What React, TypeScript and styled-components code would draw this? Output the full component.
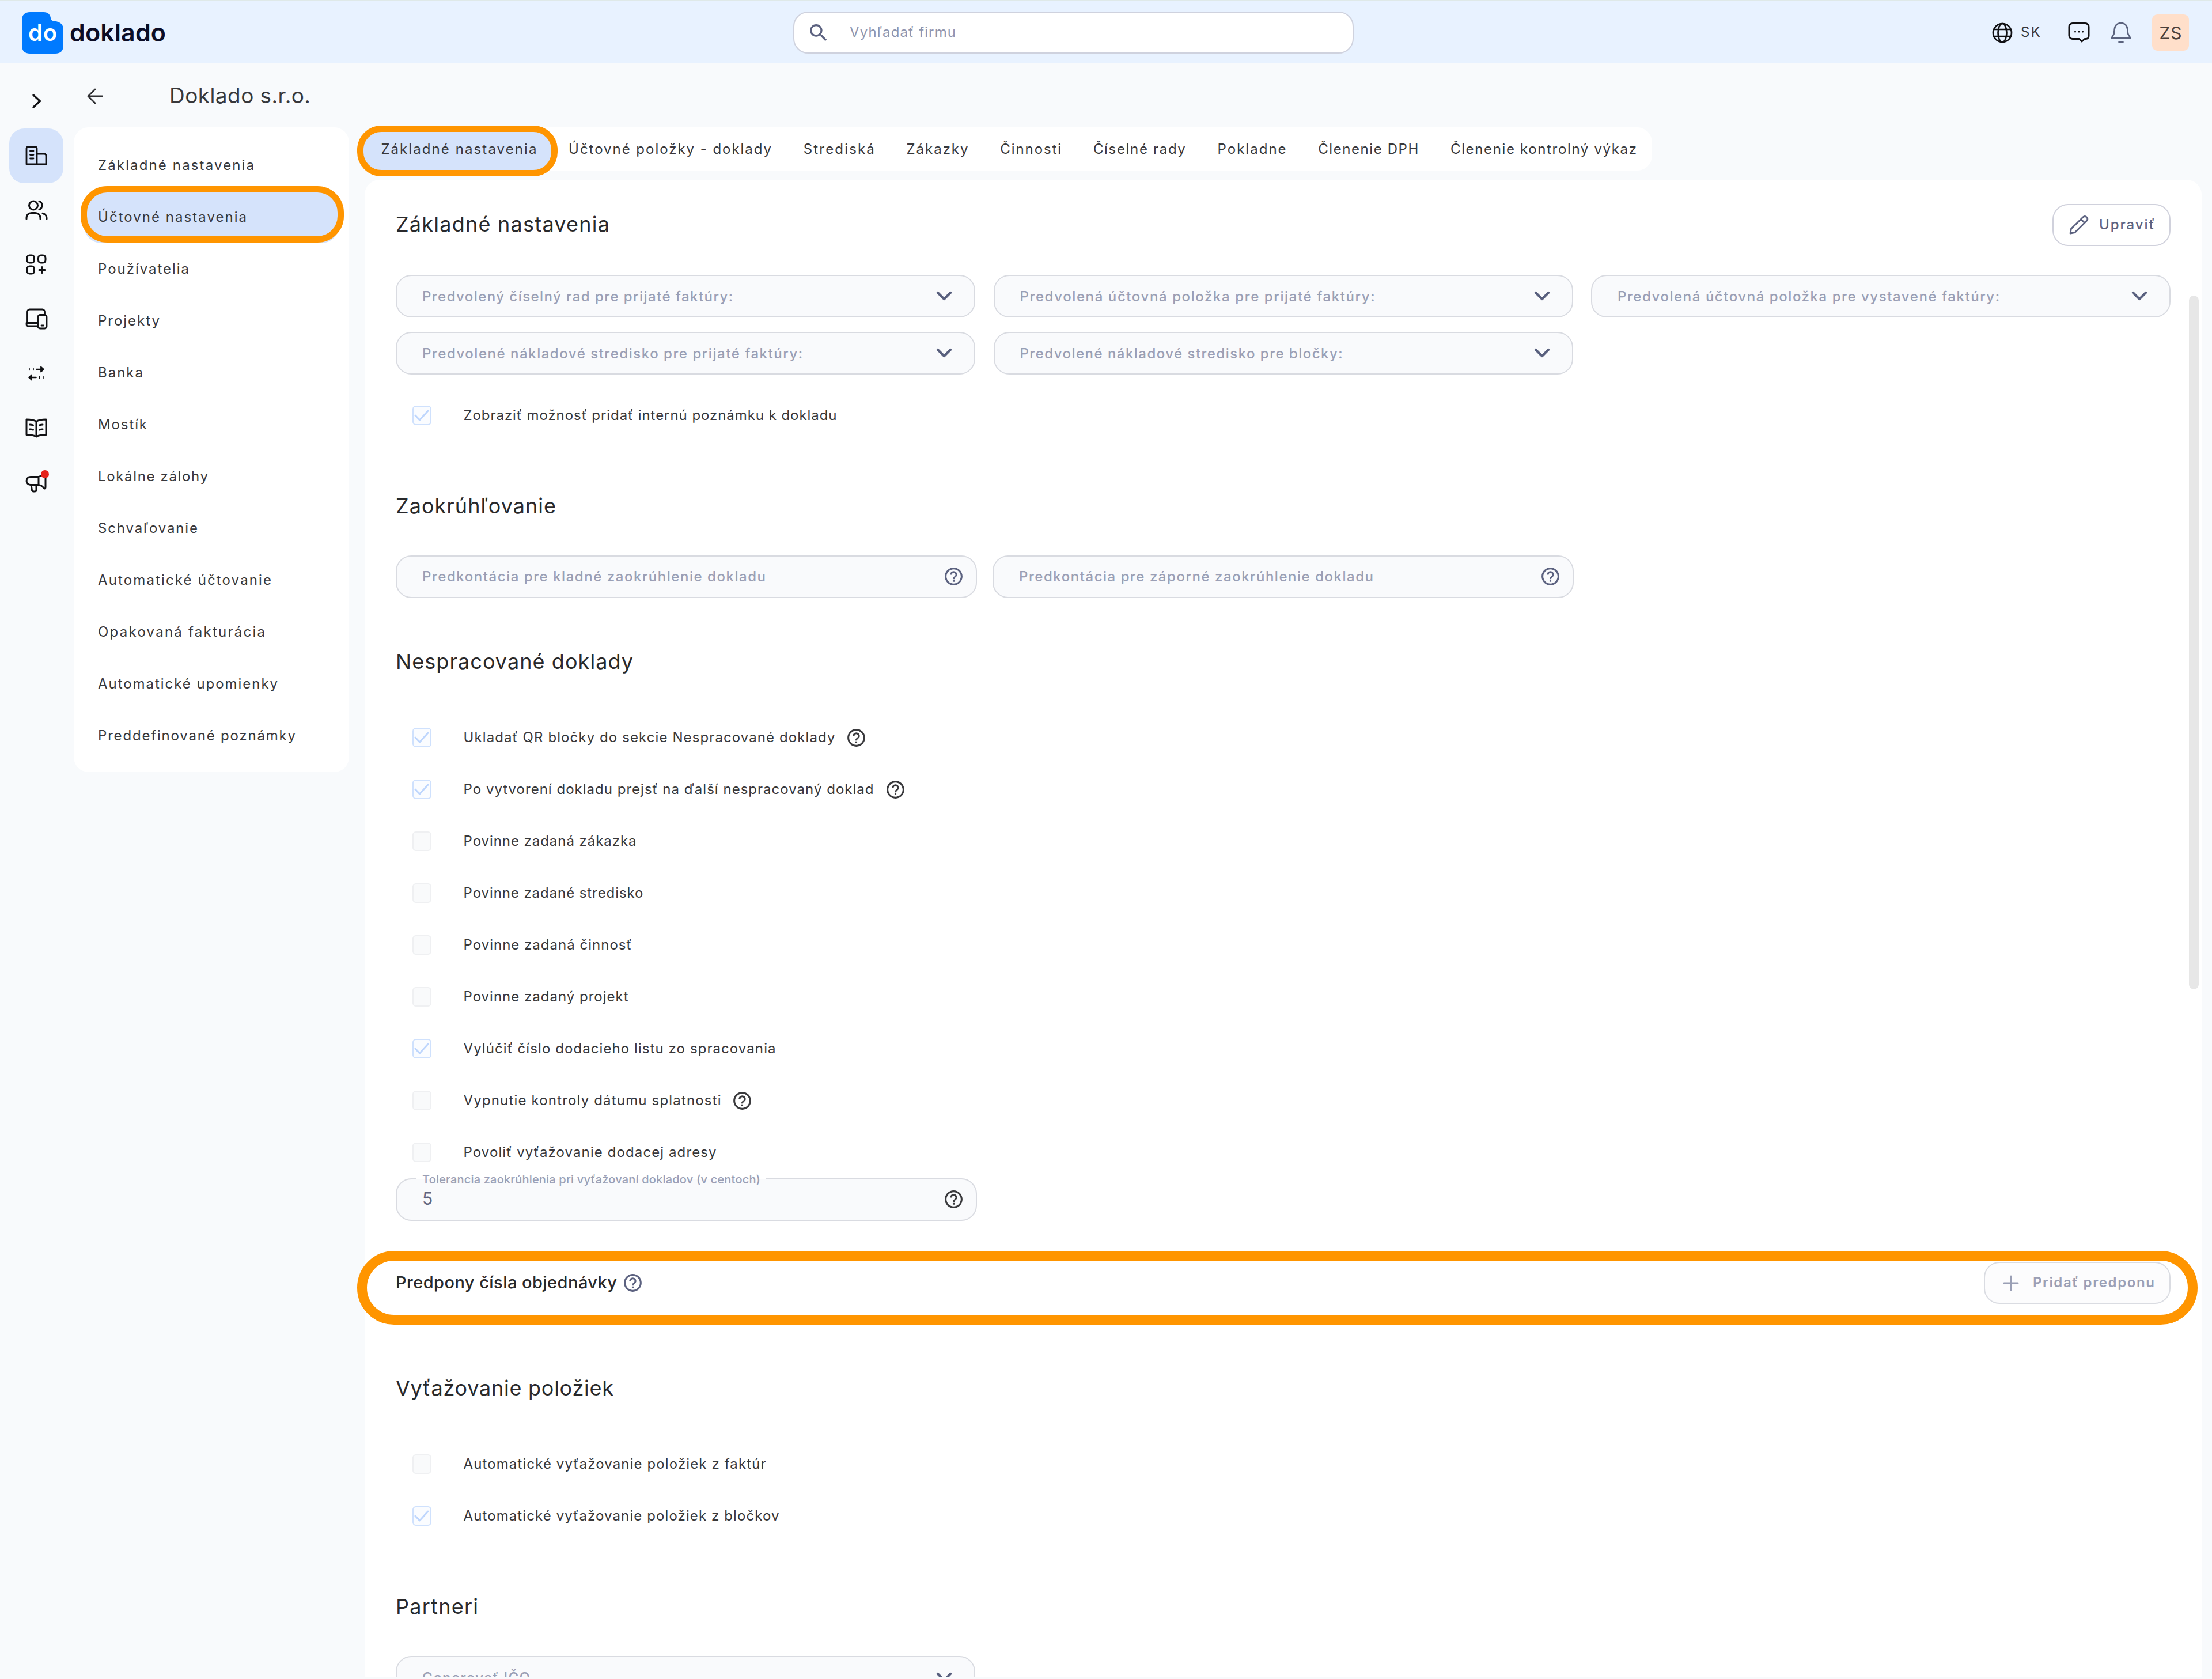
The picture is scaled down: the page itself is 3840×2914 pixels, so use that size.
import React, { useLayoutEffect, useRef, useState } from "react";
import styled, { createGlobalStyle, css } from "styled-components";
import { MdHelpOutline, MdSearch } from "react-icons/md";

const color = {
  page: "#f8fafc",
  header: "#e8f2ff",
  active: "#d5e3fb",
  ink: "#38383b",
  heading: "#29292b",
  muted: "#9a9fb5",
  slate: "#5c6280",
  line: "#d9dbe1",
  orange: "#ff9500",
  brand: "#007aff",
};

const GlobalStyle = createGlobalStyle`
  * { box-sizing: border-box; }
  html, body { margin: 0; padding: 0; background: ${color.page}; }
  body {
    font-family: Inter, "Noto Sans", "Liberation Sans", sans-serif;
    color: ${color.ink};
    overflow: hidden;
  }
  svg { display: block; flex: none; }
`;

/* ---------- text that tracks out to a given measure ---------- */

const Run = styled.span<{ $size?: number; $weight?: number; $color?: string }>`
  display: inline-block;
  flex: none;
  white-space: pre;
  line-height: 1.2;
  font-size: ${(p) => p.$size ?? 24}px;
  font-weight: ${(p) => p.$weight ?? 400};
  color: ${(p) => p.$color ?? color.ink};
`;

type TrackedProps = {
  children: string;
  measure: number;
  size?: number;
  weight?: number;
  tone?: string;
};

function Tracked({ children, measure, size, weight, tone }: TrackedProps) {
  const ref = useRef<HTMLSpanElement>(null);
  const [spacing, setSpacing] = useState(0);
  useLayoutEffect(() => {
    const el = ref.current;
    if (!el || children.length < 2) return;
    el.style.letterSpacing = "0px";
    const natural = el.getBoundingClientRect().width;
    const next = (measure - natural) / (children.length - 1);
    el.style.letterSpacing = `${next}px`;
    setSpacing(next);
  }, [children, measure, size, weight]);
  return (
    <Run
      ref={ref}
      $size={size}
      $weight={weight}
      $color={tone}
      style={{ letterSpacing: spacing, marginRight: -spacing }}
    >
      {children}
    </Run>
  );
}

/* ---------- frame ---------- */

const Screen = styled.div`
  width: 3840px;
  height: 2914px;
  display: flex;
  flex-direction: column;
  background: ${color.page};
  overflow: hidden;
`;

const Header = styled.header`
  height: 109px;
  flex: none;
  display: grid;
  grid-template-columns: 1377px 973px 1fr;
  align-items: center;
  padding-top: 2px;
  border-top: 2px solid #dfe9e8;
  background: ${color.header};
`;

const Brand = styled.div`
  display: flex;
  align-items: center;
  gap: 11px;
  padding-left: 38px;
`;

const LogoMark = styled.div`
  position: relative;
  width: 72px;
  height: 72px;
`;

const LogoLetters = styled.div`
  position: absolute;
  inset: 0;
  display: flex;
  align-items: center;
  justify-content: center;
`;

const SearchBox = styled.div`
  height: 73px;
  display: flex;
  align-items: center;
  gap: 34px;
  padding-left: 22px;
  border: 2px solid #cfd2de;
  border-radius: 26px;
  background: #fff;
`;

const HeaderTools = styled.div`
  display: flex;
  align-items: center;
  justify-content: flex-end;
  padding-right: 40px;
`;

const Language = styled.div`
  display: flex;
  align-items: center;
  gap: 14px;
  margin-right: 48px;
`;

const ToolSlot = styled.div<{ $gap: number }>`
  margin-right: ${(p) => p.$gap}px;
`;

const Avatar = styled.div`
  width: 64px;
  height: 63px;
  display: flex;
  align-items: center;
  justify-content: center;
  border-radius: 9px;
  background: #ffdfca;
`;

const Body = styled.div`
  flex: 1;
  min-height: 0;
  display: flex;
`;

/* ---------- icon rail ---------- */

const Rail = styled.nav`
  width: 128px;
  flex: none;
  display: flex;
  flex-direction: column;
  padding-left: 16px;
`;

const RailToggle = styled.div`
  width: 94px;
  height: 114px;
  display: flex;
  align-items: flex-end;
  justify-content: center;
  padding: 0 0 34px 2px;
`;

const RailItem = styled.div<{ $active?: boolean }>`
  position: relative;
  width: 94px;
  height: 94.5px;
  display: flex;
  align-items: center;
  justify-content: center;
  border-radius: 26px;
  background: ${(p) => (p.$active ? color.active : "transparent")};
`;

const NewsDot = styled.span`
  position: absolute;
  left: 55px;
  top: 26px;
  width: 14px;
  height: 14px;
  border-radius: 50%;
  background: #e5221b;
`;

/* ---------- settings menu ---------- */

const SideColumn = styled.aside`
  width: 478px;
  flex: none;
  display: flex;
  flex-direction: column;
`;

const CompanyBar = styled.div`
  height: 112px;
  display: flex;
  align-items: center;
  gap: 115px;
  padding: 3px 0 0 23px;
`;

const Menu = styled.div`
  height: 1119px;
  display: flex;
  flex-direction: column;
  padding: 21px 18px;
  border-radius: 26px;
  background: #fff;
`;

const MenuItem = styled.div<{ $active?: boolean }>`
  position: relative;
  height: 90px;
  flex: none;
  display: flex;
  align-items: center;
  padding-left: 24px;
  border-radius: 30px;
  background: ${(p) => (p.$active ? color.active : "transparent")};
`;

const ring = css`
  position: absolute;
  border-style: solid;
  border-color: ${color.orange};
  pointer-events: none;
`;

const MenuRing = styled.span`
  ${ring}
  left: -6px;
  right: -9px;
  top: -9px;
  bottom: 1px;
  border-width: 11px;
  border-radius: 46px;
`;

/* ---------- content ---------- */

const Content = styled.main`
  width: 3216px;
  padding-top: 112px;
  margin-left: 27px;
  display: flex;
  flex-direction: column;
`;

const Tabs = styled.div`
  width: 2235px;
  height: 75px;
  flex: none;
  display: flex;
  border-radius: 26px;
  background: #fff;
`;

const Tab = styled.div<{ $active?: boolean }>`
  position: relative;
  display: flex;
  align-items: center;
  padding: 2px 27.3px 0 28.4px;
  border-radius: 30px;
  background: ${(p) => (p.$active ? color.active : "transparent")};
`;

const TabRing = styled.span`
  ${ring}
  left: -13px;
  right: -9px;
  top: -3px;
  height: 88px;
  border-width: 11px;
  border-radius: 42px;
`;

const TabUnderlay = styled.span`
  position: absolute;
  left: -6px;
  right: -2px;
  top: 2px;
  height: 78px;
  border-radius: 36px;
  background: ${color.active};
`;

const TabText = styled.span`
  position: relative;
  display: flex;
`;

const PanelShell = styled.div`
  position: relative;
  width: 3189px;
  flex: none;
  margin-top: 16px;
`;

const Panel = styled.section`
  height: 2598px;
  padding: 41px 54px 0;
  border-radius: 26px 26px 0 0;
  background: #fff;
  overflow: hidden;
`;

const ScrollThumb = styled.div`
  position: absolute;
  right: 5px;
  top: 201px;
  width: 17px;
  height: 1204px;
  border-radius: 9px;
  background: #e7e7e7;
`;

const SectionHead = styled.div<{ $top?: number }>`
  height: 74px;
  display: flex;
  align-items: center;
  justify-content: space-between;
  margin-top: ${(p) => p.$top ?? 0}px;
`;

const FieldGrid = styled.div<{ $col: number; $gap: number; $top: number; $count: number }>`
  display: grid;
  grid-template-columns: repeat(${(p) => p.$count}, ${(p) => p.$col}px);
  column-gap: ${(p) => p.$gap}px;
  row-gap: 25px;
  margin-top: ${(p) => p.$top}px;
`;

const FieldBox = styled.div<{ $help?: boolean }>`
  position: relative;
  height: 74px;
  display: flex;
  align-items: center;
  justify-content: space-between;
  padding: 0 ${(p) => (p.$help ? 20.5 : 38)}px 1px 44px;
  border: 2px solid ${color.line};
  border-radius: 27px;
  background: #f9fafc;
`;

const SelectLabel = styled.span`
  display: flex;
  padding-top: 4px;
`;

const HelpLabel = styled.span`
  display: flex;
  padding-top: 1px;
`;

const FieldValue = styled.span`
  display: flex;
  padding-bottom: 3px;
`;

const FloatingLabel = styled.span`
  position: absolute;
  left: 34px;
  top: -12px;
  height: 24px;
  display: flex;
  align-items: center;
  padding: 0 9px 0 10px;
  background: linear-gradient(#fff 50%, #f9fafc 50%);
`;

const Checks = styled.div<{ $top: number }>`
  margin-top: ${(p) => p.$top}px;
`;

const CheckRow = styled.div`
  height: 90px;
  display: flex;
  align-items: center;
  padding-left: 28.5px;
`;

const Box = styled.span<{ $on?: boolean }>`
  width: 33px;
  height: 34px;
  flex: none;
  display: flex;
  align-items: center;
  justify-content: center;
  margin-right: 56px;
  border: 2px solid ${(p) => (p.$on ? "#cfe1fd" : "#eff0f2")};
  border-radius: 6px;
  background: ${(p) => (p.$on ? "#fafcff" : "#f9fafb")};
`;

const HelpSlot = styled.span<{ $gap: number }>`
  margin-left: ${(p) => p.$gap}px;
`;

const Button = styled.button<{ $width: number; $disabled?: boolean }>`
  width: ${(p) => p.$width}px;
  height: 73px;
  flex: none;
  display: flex;
  align-items: center;
  justify-content: space-between;
  padding: 0 26px 0 ${(p) => (p.$disabled ? 31 : 27)}px;
  border: 2px solid ${(p) => (p.$disabled ? "#dadce2" : "#d0d1dc")};
  border-radius: 27px;
  background: ${(p) => (p.$disabled ? "#fcfcfd" : "#fff")};
  font-family: inherit;
`;

const PrefixRow = styled.div`
  height: 73px;
  display: flex;
  align-items: center;
  justify-content: space-between;
  margin-top: 71px;
`;

const PrefixTitle = styled.div`
  display: flex;
  align-items: center;
`;

const PrefixRing = styled.span`
  ${ring}
  left: -13px;
  right: 7px;
  top: 1859px;
  height: 128px;
  border-width: 17px;
  border-radius: 64px;
`;

/* ---------- icons ---------- */

type GlyphProps = { w: number; h: number; stroke?: number; tone?: string; children: React.ReactNode };

function Glyph({ w, h, stroke = 3, tone = "#111114", children }: GlyphProps) {
  return (
    <svg
      width={w}
      height={h}
      viewBox={`0 0 ${w} ${h}`}
      fill="none"
      stroke={tone}
      strokeWidth={stroke}
      strokeLinecap="round"
      strokeLinejoin="round"
    >
      {children}
    </svg>
  );
}

const ChevronRight = () => (
  <Glyph w={18} h={27} stroke={3.4}>
    <path d="M3 3l11.5 10.5L3 24" />
  </Glyph>
);

const ArrowBack = () => (
  <Glyph w={28} h={28} tone="#303033" stroke={2.8}>
    <path d="M26.5 14H2M14 2L2 14l12 12" />
  </Glyph>
);

const ChevronDown = () => (
  <Glyph w={28} h={18} tone="#59607e" stroke={4.2}>
    <path d="M3 3l11 11L25 3" />
  </Glyph>
);

const Building = () => (
  <Glyph w={38} h={34} stroke={2.8}>
    <path d="M2 32V4.500a3 3 0 0 1 3-3h12a3 3 0 0 1 3 3V32M20 14h13a3 3 0 0 1 3 3v15H2" />
    <path d="M8.500 9H14M8.500 15.500H14M8.500 22H14" />
  </Glyph>
);

const Users = () => (
  <Glyph w={39} h={35}>
    <circle cx="14" cy="9.500" r="7.500" />
    <path d="M2 33v-2c0-5 4-8.500 9-8.500h6c5 0 9 3.500 9 8.500v2" />
    <path d="M24 2.400a7.500 7.500 0 0 1 0 14.200M30 23.200c4 1.300 7 4.300 7 8V33" />
  </Glyph>
);

const Apps = () => (
  <Glyph w={37} h={36}>
    <rect x="2" y="2" width="12.500" height="13" rx="4.500" />
    <rect x="21.500" y="2" width="12.500" height="13" rx="4.500" />
    <rect x="2" y="21" width="12.500" height="13" rx="4.500" />
    <path d="M28 22.500v10M23 27.500h10" />
  </Glyph>
);

const Devices = () => (
  <Glyph w={39} h={37} stroke={2.8}>
    <path d="M3.500 25V6a4 4 0 0 1 4-4h22a4 4 0 0 1 4 4v5" />
    <path d="M22 31H5a3 3 0 0 1-3-3v-2.500h20" />
    <rect x="22" y="11.500" width="15" height="23.500" rx="3.500" />
    <path d="M28 30h3.500" />
  </Glyph>
);

const Transfers = () => (
  <Glyph w={32} h={28} stroke={1.8}>
    <path d="M4 5.500v3M11 5.500v3M28 19.500v3M21.500 19.500v3" strokeWidth="1.600" />
    <path d="M16.500 7H24M15.500 21H8" strokeWidth="2.600" />
    <path d="M24 2.500l5 4.500-5 4.500zM8 16.500L3 21l5 4.500z" fill="#111114" />
  </Glyph>
);

const Book = () => (
  <Glyph w={38} h={34} stroke={3}>
    <path d="M19 5.500C14 2.500 8 2 2 2v26.500c6 0 12 .5 17 3.500 5-3 11-3.500 17-3.500V2c-6 0-12 .5-17 3.500zM19 5.500V32" />
    <path d="M8 11c2.200.1 3.800.5 5.500 1M8 19c2.200.1 3.800.5 5.500 1M30 11c-2.200.1-3.800.5-5.500 1M30 19c-2.200.1-3.800.5-5.500 1" />
  </Glyph>
);

const Megaphone = () => (
  <Glyph w={38} h={36} stroke={3}>
    <path d="M23 8.500H9a6.500 6.500 0 0 0 0 14h14zM23 8.500c4-1 7-3.500 9-6.500 1.500-1.200 3-.5 3 1.500V27c0 2-1.700 2.500-3 1-2-2.500-5-5-9-5.500" />
    <path d="M10 22.500l1.500 9.500c.5 2.800 7.500 2.800 7.500 0v-9.500" />
  </Glyph>
);

const Globe = () => (
  <Glyph w={36} h={36} stroke={2.7}>
    <circle cx="18" cy="18" r="16" />
    <ellipse cx="18" cy="18" rx="7.500" ry="16" />
    <path d="M3.500 12h29M3.500 24h29" />
  </Glyph>
);

const Chat = () => (
  <Glyph w={38} h={37} stroke={3}>
    <path d="M8 2.500h22a6 6 0 0 1 6 6v16a5 5 0 0 1-5 5h-2L24 34l-4.500-4.500H8a6 6 0 0 1-6-6v-15a6 6 0 0 1 6-6z" />
    <path d="M12.500 17h.01M19 17h.01M25.500 17h.01" />
  </Glyph>
);

const Bell = () => (
  <Glyph w={36} h={38} tone="#5b637e" stroke={2.6}>
    <path d="M18 2c-7 0-11 5-11.300 11L6 20c-.3 2.200-4 5.800-4 8h32c0-2.200-3.700-5.800-4-8l-.7-7C29 7 25 2 18 2zM14.500 35h7" />
  </Glyph>
);

const Pencil = () => (
  <Glyph w={34} h={34} tone={color.slate} stroke={2.8}>
    <path d="M2 32l1.500-8L24.500 3.500a4.500 4.500 0 0 1 6.300 6.300L10 30.500zM20.500 7.500l6.300 6.300" />
  </Glyph>
);

const Plus = () => (
  <Glyph w={28} h={28} tone={color.muted} stroke={3}>
    <path d="M14 2v24M2 14h24" />
  </Glyph>
);

const Tick = () => (
  <Glyph w={26} h={20} tone="#bed6fd" stroke={3}>
    <path d="M2 10l7.500 8L24 2" />
  </Glyph>
);

/* ---------- parts ---------- */

const LABEL = { weight: 500, tone: color.muted };

function SelectField({ label, measure }: { label: string; measure: number }) {
  return (
    <FieldBox>
      <SelectLabel>
        <Tracked measure={measure} {...LABEL}>{label}</Tracked>
      </SelectLabel>
      <ChevronDown />
    </FieldBox>
  );
}

function HelpField({ label, measure }: { label: string; measure: number }) {
  return (
    <FieldBox $help>
      <HelpLabel>
        <Tracked measure={measure} {...LABEL}>{label}</Tracked>
      </HelpLabel>
      <MdHelpOutline size={37} color={color.slate} />
    </FieldBox>
  );
}

type Option = { label: string; measure: number; on?: boolean; help?: number };

function Check({ label, measure, on, help }: Option) {
  return (
    <CheckRow>
      <Box $on={on}>{on && <Tick />}</Box>
      <Tracked measure={measure}>{label}</Tracked>
      {help !== undefined && (
        <HelpSlot $gap={help}>
          <MdHelpOutline size={37} color="#3a3a3d" />
        </HelpSlot>
      )}
    </CheckRow>
  );
}

function Title({ children, measure }: { children: string; measure: number }) {
  return <Tracked size={36} measure={measure} tone={color.heading}>{children}</Tracked>;
}

const menu: [string, number][] = [
  ["Základné nastavenia", 271],
  ["Účtovné nastavenia", 258],
  ["Používatelia", 158],
  ["Projekty", 107],
  ["Banka", 78],
  ["Mostík", 85],
  ["Lokálne zálohy", 191],
  ["Schvaľovanie", 173],
  ["Automatické účtovanie", 301],
  ["Opakovaná fakturácia", 290],
  ["Automatické upomienky", 312],
  ["Preddefinované poznámky", 343],
];

const tabs: [string, number][] = [
  ["Základné nastavenia", 270],
  ["Účtovné položky - doklady", 352],
  ["Strediská", 123],
  ["Zákazky", 107],
  ["Činnosti", 106],
  ["Číselné rady", 160],
  ["Pokladne", 119],
  ["Členenie DPH", 174],
  ["Členenie kontrolný výkaz", 323],
];

const selects: [string, number][] = [
  ["Predvolený číselný rad pre prijaté faktúry:", 539],
  ["Predvolená účtovná položka pre prijaté faktúry:", 616],
  ["Predvolená účtovná položka pre vystavené faktúry:", 663],
  ["Predvolené nákladové stredisko pre prijaté faktúry:", 660],
  ["Predvolené nákladové stredisko pre bločky:", 560],
];

const unprocessed: Option[] = [
  { label: "Ukladať QR bločky do sekcie Nespracované doklady", measure: 645, on: true, help: 18 },
  { label: "Po vytvorení dokladu prejsť na ďalší nespracovaný doklad", measure: 712, on: true, help: 19 },
  { label: "Povinne zadaná zákazka", measure: 300 },
  { label: "Povinne zadané stredisko", measure: 312 },
  { label: "Povinne zadaná činnosť", measure: 292 },
  { label: "Povinne zadaný projekt", measure: 286 },
  { label: "Vylúčiť číslo dodacieho listu zo spracovania", measure: 542, on: true },
  { label: "Vypnutie kontroly dátumu splatnosti", measure: 447, help: 18 },
  { label: "Povoliť vyťažovanie dodacej adresy", measure: 439 },
];

const railIcons = [Building, Users, Apps, Devices, Transfers, Book, Megaphone];

export default function App() {
  return (
    <Screen>
      <GlobalStyle />
      <Header>
        <Brand>
          <LogoMark>
            <svg width="72" height="72" viewBox="0 0 72 72">
              <path
                d="M14 0h24c7 0 11 4 12 10 .5 3.500 2 5 6 5.500C66 16.500 72 21 72 30v28c0 9-5 14-14 14H14C5 72 0 67 0 58V14C0 5 5 0 14 0z"
                fill={color.brand}
              />
            </svg>
            <LogoLetters>
              <Tracked size={40} weight={600} measure={50} tone="#fff">do</Tracked>
            </LogoLetters>
          </LogoMark>
          <Tracked size={43} weight={600} measure={167} tone="#0b0d26">doklado</Tracked>
        </Brand>
        <SearchBox>
          <MdSearch size={40} color={color.slate} />
          <Tracked measure={184} tone="#8f95ae">Vyhľadať firmu</Tracked>
        </SearchBox>
        <HeaderTools>
          <Language>
            <Globe />
            <Tracked measure={34}>SK</Tracked>
          </Language>
          <ToolSlot $gap={36}><Chat /></ToolSlot>
          <ToolSlot $gap={36}><Bell /></ToolSlot>
          <Avatar>
            <Tracked size={30} measure={39} tone="#4b403b">ZS</Tracked>
          </Avatar>
        </HeaderTools>
      </Header>

      <Body>
        <Rail>
          <RailToggle><ChevronRight /></RailToggle>
          {railIcons.map((Icon, i) => (
            <RailItem key={i} $active={i === 0}>
              <Icon />
              {Icon === Megaphone && <NewsDot />}
            </RailItem>
          ))}
        </Rail>

        <SideColumn>
          <CompanyBar>
            <ArrowBack />
            <Tracked size={37} measure={245}>Doklado s.r.o.</Tracked>
          </CompanyBar>
          <Menu>
            {menu.map(([label, measure], i) => (
              <MenuItem key={label} $active={i === 1}>
                <Tracked measure={measure}>{label}</Tracked>
                {i === 1 && <MenuRing />}
              </MenuItem>
            ))}
          </Menu>
        </SideColumn>

        <Content>
          <Tabs>
            {tabs.map(([label, measure], i) => (
              <Tab key={label} $active={i === 0}>
                {i === 0 && <TabUnderlay />}
                <TabText><Tracked measure={measure}>{label}</Tracked></TabText>
                {i === 0 && <TabRing />}
              </Tab>
            ))}
          </Tabs>

          <PanelShell>
            <Panel>
              <SectionHead>
                <Title measure={371}>Základné nastavenia</Title>
                <Button $width={205}>
                  <Pencil />
                  <Tracked weight={500} measure={96} tone={color.slate}>Upraviť</Tracked>
                </Button>
              </SectionHead>
              <FieldGrid $count={3} $col={1006} $gap={31.5} $top={50}>
                {selects.map(([label, measure]) => (
                  <SelectField key={label} label={label} measure={measure} />
                ))}
              </FieldGrid>
              <Checks $top={26}>
                <Check label="Zobraziť možnosť pridať internú poznámku k dokladu" measure={648} on />
              </Checks>

              <SectionHead $top={76}>
                <Title measure={278}>Zaokrúhľovanie</Title>
              </SectionHead>
              <FieldGrid $count={2} $col={1009} $gap={27} $top={48}>
                <HelpField label="Predkontácia pre kladné zaokrúhlenie dokladu" measure={596} />
                <HelpField label="Predkontácia pre záporné zaokrúhlenie dokladu" measure={615} />
              </FieldGrid>

              <SectionHead $top={74}>
                <Title measure={412}>Nespracované doklady</Title>
              </SectionHead>
              <Checks $top={49}>
                {unprocessed.map((o) => <Check key={o.label} {...o} />)}
              </Checks>
              <FieldGrid $count={1} $col={1009} $gap={0} $top={0}>
                <FieldBox $help>
                  <FloatingLabel>
                    <Tracked size={20} weight={500} measure={587} tone={color.muted}>
                      Tolerancia zaokrúhlenia pri vyťažovaní dokladov (v centoch)
                    </Tracked>
                  </FloatingLabel>
                  <FieldValue><Run $size={30} $color="#5f6480">5</Run></FieldValue>
                  <MdHelpOutline size={37} color="#3a3a3d" />
                </FieldBox>
              </FieldGrid>

              <PrefixRow>
                <PrefixTitle>
                  <Tracked size={29} weight={500} measure={384} tone={color.heading}>
                    Predpony čísla objednávky
                  </Tracked>
                  <HelpSlot $gap={9}>
                    <MdHelpOutline size={37} color={color.slate} />
                  </HelpSlot>
                </PrefixTitle>
                <Button $width={324} $disabled>
                  <Plus />
                  <Tracked weight={600} measure={211} tone={color.muted}>Pridať predponu</Tracked>
                </Button>
              </PrefixRow>

              <SectionHead $top={110}>
                <Title measure={378}>Vyťažovanie položiek</Title>
              </SectionHead>
              <Checks $top={49}>
                <Check label="Automatické vyťažovanie položiek z faktúr" measure={525} />
                <Check label="Automatické vyťažovanie položiek z bločkov" measure={548} on />
              </Checks>

              <SectionHead $top={76}>
                <Title measure={143}>Partneri</Title>
              </SectionHead>
              <FieldGrid $count={1} $col={1006} $gap={0} $top={48}>
                <SelectField label="Generovať IČO" measure={187} />
              </FieldGrid>
            </Panel>
            <ScrollThumb />
            <PrefixRing />
          </PanelShell>
        </Content>
      </Body>
    </Screen>
  );
}
